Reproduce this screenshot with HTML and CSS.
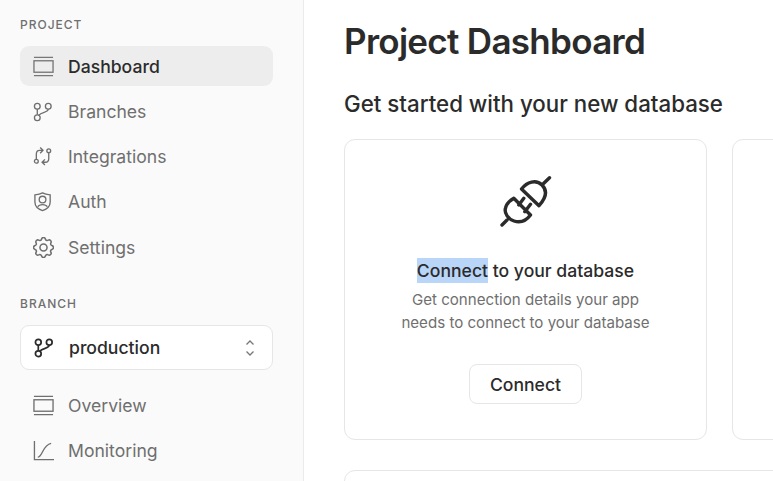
FILE: index.html
```html
<!DOCTYPE html>
<html lang="en">
<head>
<meta charset="utf-8">
<title>Project Dashboard</title>
<link rel="stylesheet" href="styles.css">
</head>
<body>
<div class="app">
  <aside class="sidebar">
    <div class="section-label">PROJECT</div>
    <nav class="nav">
      <a class="nav-item active"><svg class="icon" viewBox="0 0 22 22"><path d="M1 1.500h20M1 20.500h20"/><rect x="1" y="5" width="20" height="12"/></svg><span>Dashboard</span></a>
      <a class="nav-item"><svg class="icon" viewBox="0 0 22 22"><circle cx="4.500" cy="5.500" r="3"/><circle cx="16" cy="5.500" r="3"/><circle cx="4.500" cy="17.500" r="3"/><path d="M4.500 8.500v6M16 8.500c0 4-7 2.500-10 6.500"/></svg><span>Branches</span></a>
      <a class="nav-item"><svg class="icon" viewBox="0 0 22 22"><circle cx="16.500" cy="5" r="2"/><circle cx="3.500" cy="16" r="2"/><path d="M3.500 14V8.500C3.500 6 5 4.500 7 4.500h3M7.500 1.500l3 3-3 3M16.500 7v6c0 2.500-1.500 4-3.500 4h-3M12.500 14l-3 3 3 3"/></svg><span>Integrations</span></a>
      <a class="nav-item"><svg class="icon" viewBox="0 0 22 22"><path d="M10 2c2.500 1.400 5 1.800 8 2v7.500c0 4.500-3.500 7.500-8 9-4.500-1.500-8-4.500-8-9V4c3-.2 5.500-.6 8-2z"/><circle cx="10" cy="9" r="3.500"/><path d="M5 16.500c1.500-3 8.500-3 10 0"/></svg><span>Auth</span></a>
      <a class="nav-item"><svg class="icon" viewBox="2.500 2.500 19 19"><circle cx="12" cy="12" r="3.200"/><path d="M10.300 4.300c.4-1.800 3-1.800 3.400 0a1.700 1.700 0 0 0 2.600 1.100c1.500-.9 3.300.8 2.400 2.400a1.700 1.700 0 0 0 1 2.500c1.800.4 1.800 3 0 3.400a1.700 1.700 0 0 0-1 2.600c.9 1.500-.9 3.300-2.400 2.400a1.700 1.700 0 0 0-2.600 1c-.4 1.800-3 1.800-3.400 0a1.700 1.700 0 0 0-2.600-1c-1.500.9-3.300-.9-2.400-2.400a1.700 1.700 0 0 0-1-2.600c-1.800-.4-1.800-3 0-3.400a1.700 1.700 0 0 0 1-2.500c-.9-1.600.9-3.300 2.400-2.400a1.700 1.700 0 0 0 2.600-1.100z"/></svg><span>Settings</span></a>
    </nav>
    <div class="section-label branch-label">BRANCH</div>
    <div class="branch-select">
      <svg class="icon dark" viewBox="0 0 22 22"><circle cx="4.500" cy="5.500" r="3"/><circle cx="16" cy="5.500" r="3"/><circle cx="4.500" cy="17.500" r="3"/><path d="M4.500 8.500v6M16 8.500c0 4-7 2.500-10 6.500"/></svg>
      <span class="branch-name">production</span>
      <svg class="chevrons" viewBox="0 0 12 20"><path d="M2.500 6.500L6 3l3.500 3.500M2.500 13.500L6 17l3.500-3.500"/></svg>
    </div>
    <nav class="nav branch-nav">
      <a class="nav-item"><svg class="icon" viewBox="0 0 22 22"><path d="M1 1.500h20M1 20.500h20"/><rect x="1" y="5" width="20" height="12"/></svg><span>Overview</span></a>
      <a class="nav-item"><svg class="icon" viewBox="0 0 22 22"><path d="M1.500 1v19.500H22M5 18C10 18 10 5 19 3.500"/></svg><span>Monitoring</span></a>
    </nav>
  </aside>
  <main class="main">
    <h1 class="title">Project Dashboard</h1>
    <h2 class="subtitle">Get started with your new database</h2>
    <div class="cards">
      <section class="card">
        <svg class="plug" viewBox="0 0 60 60"><path d="M53.500 5.700L46.500 12.500M25.500 17C31 10 40 7 46 13S50 26 43 33.700ZM6 53l5-5M17.800 26.300L34.500 43C30 49 24 51 18 49S8 41 9.500 36C10.500 32 13 29 17.800 26.300ZM22.800 33l5-6.700M28.800 39.700l5.700-7.400"/></svg>
        <h3 class="card-title"><span class="selected">Connect</span> to your database</h3>
        <p class="card-text">Get connection details your app<br>needs to connect to your database</p>
        <button class="button" type="button">Connect</button>
      </section>
      <section class="card"></section>
    </div>
    <section class="card lower"></section>
  </main>
</div>
</body>
</html>
```

FILE: styles.css
```css
* { box-sizing: border-box; }
html, body { margin: 0; height: 100%; overflow: hidden; }
body { font-family: Inter, "Liberation Sans", sans-serif; background: #fff; color: #2b2b2b; }
.app { display: flex; height: 481px; overflow: hidden; }
.sidebar { flex: 0 0 304px; background: #fafafa; border-right: 1px solid #ebebeb; padding: 17px 30px 0 20px; }
.section-label { font-size: 12px; font-weight: 500; line-height: 16px; letter-spacing: 1px; color: #6f6f6f; }
.nav { display: flex; flex-direction: column; gap: 5.250px; margin-top: 13px; }
.nav-item { display: flex; align-items: center; gap: 14px; height: 40px; padding: 0 13px; border-radius: 9px; font-size: 17.600px; color: #6f6f6f; }
.nav-item.active { background: #ededed; color: #2b2b2b; font-weight: 500; }
.icon { width: 21px; height: 21px; flex: none; fill: none; stroke: #6f6f6f; stroke-width: 1.400; }
.active .icon { stroke: #777; }
.icon.dark { stroke: #2b2b2b; stroke-width: 1.800; }
.branch-label { margin-top: 29px; }
.branch-select { display: flex; align-items: center; gap: 14px; height: 45px; margin-top: 13px; padding: 0 16px 0 13px; background: #fff; border: 1px solid #e6e6e6; border-radius: 9px; }
.branch-name { flex: 1; font-size: 17.600px; font-weight: 500; color: #2b2b2b; }
.chevrons { width: 12px; height: 20px; fill: none; stroke: #777; stroke-width: 1.300; }
.branch-nav { margin-top: 15px; }
.main { flex: 1; min-width: 0; padding: 20px 0 0 40px; }
.title { margin: 0; font-size: 35px; line-height: 43px; font-weight: 600; color: #2b2b2b; letter-spacing: -0.700px; }
.subtitle { margin: 27px 0 0; font-size: 22.300px; line-height: 28px; font-weight: 500; color: #2b2b2b; }
.cards { display: flex; gap: 25px; margin-top: 21px; }
.card { flex: none; width: 363px; height: 301px; background: #fff; border: 1px solid #e6e6e6; border-radius: 11px; display: flex; flex-direction: column; align-items: center; padding-top: 32px; }
.lower { margin: 30px 0 0; width: 600px; }
.plug { width: 60px; height: 60px; fill: none; stroke: #2b2b2b; stroke-width: 3.400; stroke-linecap: round; stroke-linejoin: round; }
.card-title { margin: 26px 0 0; font-size: 17.600px; line-height: 25px; font-weight: 500; color: #2b2b2b; }
.selected { background: #b9d5f8; padding: 2px 0; }
.card-text { margin: 6px 0 0; font-size: 15.100px; line-height: 22.500px; text-align: center; color: #6f6f6f; }
.button { margin-top: 30px; width: 113px; height: 40px; background: #fff; border: 1px solid #e6e6e6; border-radius: 8px; font: 500 17.600px Inter, "Liberation Sans", sans-serif; color: #2b2b2b; }
```
